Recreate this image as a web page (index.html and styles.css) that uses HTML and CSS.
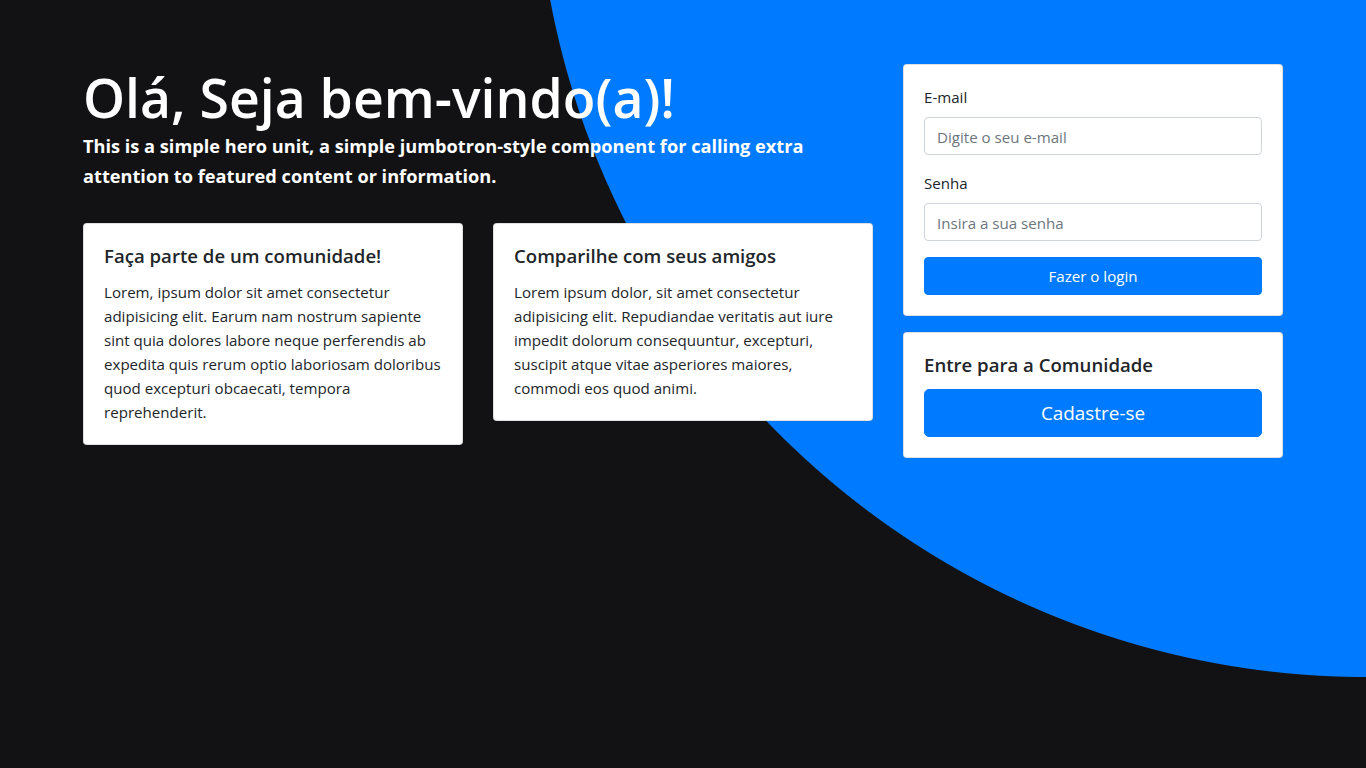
FILE: index.html
```html
<!DOCTYPE html>
<html lang="pt-BR">
<head>
<meta charset="utf-8">
<title>Comunidade</title>
<link rel="stylesheet" href="styles.css">
</head>
<body>
<main class="container">
  <section class="hero">
    <h1 class="hero-title">Olá, Seja bem-vindo(a)!</h1>
    <p class="hero-lead">This is a simple hero unit, a simple jumbotron-style component for calling extra attention to featured content or information.</p>
    <div class="features">
      <article class="card">
        <h5 class="card-title">Faça parte de um comunidade!</h5>
        <p class="card-text">Lorem, ipsum dolor sit amet consectetur adipisicing elit. Earum nam nostrum sapiente sint quia dolores labore neque perferendis ab expedita quis rerum optio laboriosam doloribus quod excepturi obcaecati, tempora reprehenderit.</p>
      </article>
      <article class="card">
        <h5 class="card-title">Comparilhe com seus amigos</h5>
        <p class="card-text">Lorem ipsum dolor, sit amet consectetur adipisicing elit. Repudiandae veritatis aut iure impedit dolorum consequuntur, excepturi, suscipit atque vitae asperiores maiores, commodi eos quod animi.</p>
      </article>
    </div>
  </section>
  <aside class="side">
    <form class="card login">
      <div class="form-group">
        <label class="label" for="email">E-mail</label>
        <input class="input" id="email" type="email" placeholder="Digite o seu e-mail">
      </div>
      <div class="form-group">
        <label class="label" for="senha">Senha</label>
        <input class="input" id="senha" type="password" placeholder="Insira a sua senha">
      </div>
      <button class="btn" type="button">Fazer o login</button>
    </form>
    <div class="card join">
      <h5 class="card-title">Entre para a Comunidade</h5>
      <button class="btn btn-lg" type="button">Cadastre-se</button>
    </div>
  </aside>
</main>
</body>
</html>
```

FILE: styles.css
```css
* { box-sizing: border-box; }

html, body {
  margin: 0;
  height: 768px;
}

html {
  background: #121214;
}

body {
  overflow: hidden;
  background:
    radial-gradient(circle 830px at 100% -153px, #007bff 829.5px, #121214 830.5px);
  font-family: "Open Sans", "Noto Sans", "Liberation Sans", sans-serif;
  font-size: 15.1px;
  line-height: 24px;
  color: #212529;
}

.container {
  max-width: 1200px;
  margin: 0 auto;
  padding-top: 64px;
  display: grid;
  grid-template-columns: 790px 380px;
  column-gap: 30px;
  align-items: start;
}

.hero-title {
  margin: 0;
  color: #fff;
  font-size: 53.5px;
  font-weight: 600;
  line-height: 67px;
}

.hero-lead {
  margin: 0 0 32px;
  color: #fff;
  font-size: 18.2px;
  font-weight: 700;
  line-height: 30px;
}

.features {
  display: grid;
  grid-template-columns: 380px 380px;
  column-gap: 30px;
  align-items: start;
}

.card {
  background: #fff;
  border: 1px solid rgba(0, 0, 0, 0.125);
  border-radius: 4px;
  padding: 20px;
}

.card-title {
  margin: 0 0 12px;
  font-size: 18.6px;
  font-weight: 600;
  line-height: 24px;
}

.card-text {
  margin: 0;
}

.side {
  display: flex;
  flex-direction: column;
  gap: 16px;
}

.login {
  display: flex;
  flex-direction: column;
}

.form-group {
  display: flex;
  flex-direction: column;
  margin-bottom: 16px;
}

.label {
  margin-bottom: 8px;
}

.input {
  height: 38px;
  padding: 7px 12px 5px;
  border: 1px solid #ced4da;
  border-radius: 4px;
  font: inherit;
  color: #495057;
  background: #fff;
}

.input::placeholder {
  color: #6c757d;
  opacity: 1;
}

.btn {
  height: 38px;
  border: 1px solid #007bff;
  border-radius: 4px;
  background: #007bff;
  color: #fff;
  font: inherit;
  padding: 0 12px;
}

.join {
  display: flex;
  flex-direction: column;
}

.btn-lg {
  height: 48px;
  font-size: 18.9px;
  border-radius: 5px;
}
```
